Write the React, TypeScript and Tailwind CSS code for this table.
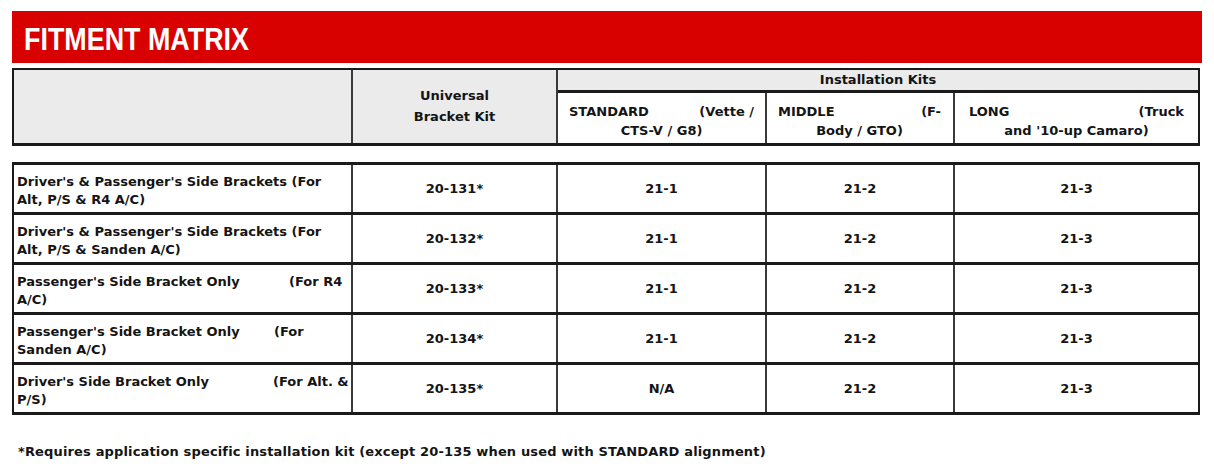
import React from "react";

type Row = {
  line1: React.ReactNode;
  line2: string;
  kit: string;
  std: string;
  mid: string;
  long: string;
};

const rows: Row[] = [
  {
    line1: <span>Driver's &amp; Passenger's Side Brackets (For</span>,
    line2: "Alt, P/S & R4 A/C)",
    kit: "20-131*",
    std: "21-1",
    mid: "21-2",
    long: "21-3",
  },
  {
    line1: <span>Driver's &amp; Passenger's Side Brackets (For</span>,
    line2: "Alt, P/S & Sanden A/C)",
    kit: "20-132*",
    std: "21-1",
    mid: "21-2",
    long: "21-3",
  },
  {
    line1: (
      <span className="flex">
        <span className="w-[272px] shrink-0">Passenger's Side Bracket Only</span>
        <span>(For R4</span>
      </span>
    ),
    line2: "A/C)",
    kit: "20-133*",
    std: "21-1",
    mid: "21-2",
    long: "21-3",
  },
  {
    line1: (
      <span className="flex">
        <span className="w-[257px] shrink-0">Passenger's Side Bracket Only</span>
        <span>(For</span>
      </span>
    ),
    line2: "Sanden A/C)",
    kit: "20-134*",
    std: "21-1",
    mid: "21-2",
    long: "21-3",
  },
  {
    line1: (
      <span className="flex">
        <span className="w-[256px] shrink-0">Driver's Side Bracket Only</span>
        <span>(For Alt. &amp;</span>
      </span>
    ),
    line2: "P/S)",
    kit: "20-135*",
    std: "N/A",
    mid: "21-2",
    long: "21-3",
  },
];

function SubHead({ a, b, c, px }: { a: string; b: string; c: string; px: string }) {
  return (
    <div className={`w-full ${px} h-full bg-white flex flex-col justify-center pt-[6px] leading-[19px]`}>
      <div className="flex justify-between whitespace-nowrap">
        <span>{a}</span>
        <span>{b}</span>
      </div>
      <div className="text-center whitespace-nowrap">{c}</div>
    </div>
  );
}

export default function App() {
  return (
    <div className="w-[1214px] h-[471px] bg-white overflow-hidden pt-[11px] pl-[12px] font-['DejaVu_Sans',sans-serif] font-bold text-[13px] text-[#141414]">
      <div className="w-[1190px] h-[52px] bg-[#d90000] flex items-center pl-[12px] pt-[4px]">
        <span className="inline-block origin-left scale-x-[0.84] text-white text-[32px] leading-none font-bold font-['Liberation_Sans',Arial,sans-serif] whitespace-nowrap">
          FITMENT MATRIX
        </span>
      </div>

      {/* Header */}
      <div className="mt-[5px] w-[1188px] h-[78px] flex border-t-2 border-x-2 border-b-[3px] border-[#1a1a1a]">
        <div className="w-[339px] h-full bg-[#ebebeb] border-r-2 border-[#3a3a3a]" />
        <div className="w-[205px] h-full bg-[#ebebeb] border-r-2 border-[#3a3a3a] flex flex-col items-center justify-center leading-[21px] pb-[1px]">
          <span>Universal</span>
          <span>Bracket Kit</span>
        </div>
        <div className="flex-1 h-full flex flex-col">
          <div className="h-[23px] bg-[#ebebeb] border-b-[3px] border-[#1a1a1a] flex items-center justify-center">
            Installation Kits
          </div>
          <div className="flex-1 flex">
            <div className="w-[209px] h-full border-r-2 border-[#3a3a3a]">
              <SubHead a="STANDARD" b="(Vette /" c="CTS-V / G8)" px="px-[11px]" />
            </div>
            <div className="w-[188px] h-full border-r-2 border-[#3a3a3a]">
              <SubHead a="MIDDLE" b="(F-" c="Body / GTO)" px="pl-[11px] pr-[12px]" />
            </div>
            <div className="flex-1 h-full">
              <SubHead a="LONG" b="(Truck" c="and '10-up Camaro)" px="px-[14px]" />
            </div>
          </div>
        </div>
      </div>

      {/* Body */}
      <div className="mt-[16px] w-[1188px] border-x-2 border-t-[3px] border-[#1a1a1a]">
        {rows.map((r, i) => (
          <div key={i} className="h-[50px] flex border-b-[3px] border-[#1a1a1a]">
            <div className="w-[339px] h-full border-r-2 border-[#3a3a3a] pl-[3px] pr-[3px] pt-[5px] flex flex-col justify-center leading-[18px] whitespace-nowrap">
              {r.line1}
              <span>{r.line2}</span>
            </div>
            <div className="w-[205px] h-full border-r-2 border-[#3a3a3a] flex items-center justify-center">
              {r.kit}
            </div>
            <div className="w-[209px] h-full border-r-2 border-[#3a3a3a] flex items-center justify-center">
              {r.std}
            </div>
            <div className="w-[188px] h-full border-r-2 border-[#3a3a3a] flex items-center justify-center">
              {r.mid}
            </div>
            <div className="flex-1 h-full flex items-center justify-center">{r.long}</div>
          </div>
        ))}
      </div>

      <div className="mt-[28px] pl-[6px] leading-[18px] whitespace-nowrap tracking-[0.15px]">
        *Requires application specific installation kit (except 20-135 when used with STANDARD alignment)
      </div>
    </div>
  );
}
